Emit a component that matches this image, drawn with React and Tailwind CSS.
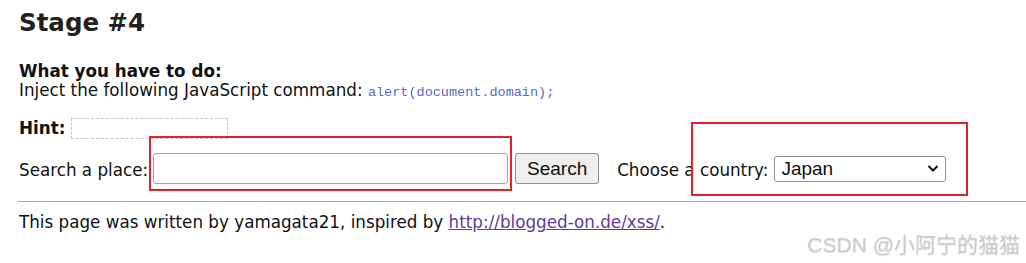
import React, { useState } from "react";

function App() {
    const [place, setPlace] = useState("");
    const [country, setCountry] = useState("Japan");

    return (
        <div className="relative w-[1026px] h-[263px] bg-white overflow-hidden text-[#111] font-['DejaVu_Sans',Verdana,sans-serif] text-[16.75px]">
            <div className="pl-[19px] pt-[8px]">
                <h1 className="text-[24.5px] font-bold leading-[30px] text-[#222]">Stage #4</h1>

                <div className="mt-[24px] leading-[19px]">
                    <div className="font-bold">What you have to do:</div>
                    <div>
                        Inject the following JavaScript command:{" "}
                        <code className="font-['Liberation_Mono',monospace] text-[13.5px] text-[#5b68c4]">alert(document.domain);</code>
                    </div>
                </div>

                <div className="mt-[15px] flex items-center h-[22px] leading-[19px]">
                    <span className="font-bold">Hint:</span>
                    <span className="ml-[6px] w-[157px] h-[21px] border border-dashed border-[#c4c4c4]"></span>
                </div>

                <form className="mt-[14px] flex items-center h-[31px] leading-[19px]" onSubmit={(e) => e.preventDefault()}>
                    <label className="pt-[3px]">Search a place:</label>
                    <input
                        value={place}
                        onChange={(e) => setPlace(e.target.value)}
                        className="ml-[5px] w-[355px] h-[31px] border border-[#a3a3a3] rounded-[3px] outline-none px-1"
                    />
                    <button className="ml-[7px] w-[84px] h-[31px] border border-[#8f8f8f] rounded-[3px] bg-[#efefef] text-[19px] font-['Liberation_Sans',Arial,sans-serif] text-[#111]">
                        Search
                    </button>
                    <label className="ml-[18px] pt-[3px]">Choose a country:</label>
                    <div className="relative ml-[6px] mt-[1px]">
                        <select
                            value={country}
                            onChange={(e) => setCountry(e.target.value)}
                            className="appearance-none w-[172px] h-[26px] border border-[#8f8f8f] rounded-[3px] bg-white pl-[6px] text-[19px] leading-[22px] font-['Liberation_Sans',Arial,sans-serif] text-[#111] outline-none"
                        >
                            <option>Japan</option>
                            <option>Germany</option>
                            <option>USA</option>
                            <option>United Kingdom</option>
                        </select>
                        <svg className="absolute right-[7px] top-[8px] pointer-events-none" width="12" height="9" viewBox="0 0 12 9">
                            <path d="M1.5 2 L6 6.5 L10.5 2" fill="none" stroke="#111" strokeWidth="2" />
                        </svg>
                    </div>
                </form>
            </div>

            <hr className="mt-[17px] ml-[18px] border-0 border-t border-[#a8a8a8]" />

            <div className="pl-[19px] mt-[11px] leading-[19px]">
                This page was written by yamagata21, inspired by{" "}
                <a href="#" className="text-[#5f3a9e] underline">http://blogged-on.de/xss/</a>.
            </div>

            {/* annotation boxes */}
            <div className="absolute left-[149px] top-[136px] w-[363px] h-[55px] border-2 border-[#e8202c] pointer-events-none"></div>
            <div className="absolute left-[691px] top-[122px] w-[277px] h-[74px] border-2 border-[#e8202c] pointer-events-none"></div>

            <div className="absolute right-[6px] bottom-[7px] leading-[22px] text-[21px] text-[#cdcdcd] font-['Liberation_Sans','Noto_Sans_CJK_SC',sans-serif] [text-shadow:0_1px_1px_rgba(0,0,0,0.12)]">
                CSDN @小阿宁的猫猫
            </div>
        </div>
    );
}

export default App;
